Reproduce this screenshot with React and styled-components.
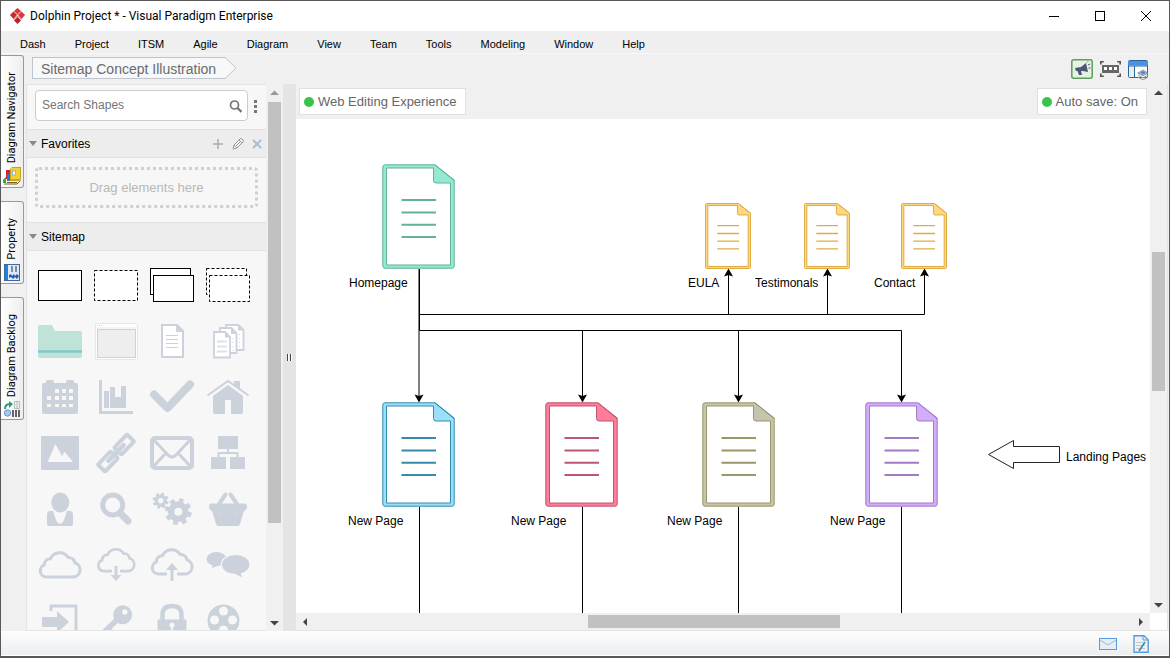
import React from "react";
import styled, { createGlobalStyle, css } from "styled-components";

const GlobalStyle = createGlobalStyle`
  * { box-sizing: border-box; }
  body { margin: 0; font-family: "Liberation Sans", Arial, sans-serif; font-size: 12px; color: #000; }
  button, input { font: inherit; color: inherit; }
  button { border: 0; background: none; padding: 0; cursor: pointer; }
  svg { display: block; flex: none; }
`;

const Frame = styled.div`
  display: flex;
  flex-direction: column;
  height: 100vh;
  border: 1px solid #58585a;
  border-bottom-width: 2px;
  background: #f0f0f0;
`;

/* ---------- title and menu ---------- */

const TitleBar = styled.header`
  display: flex;
  align-items: center;
  height: 30px;
  flex: none;
  padding-left: 9px;
  background: #fff;
`;

const Title = styled.h1`
  flex: 1;
  margin: 0 0 0 5px;
  font: 400 12px/16px Roboto, "Open Sans", sans-serif;
`;

const WindowButton = styled.button`
  display: grid;
  place-items: center;
  width: 46px;
  height: 30px;
`;

const MenuBar = styled.nav`
  display: flex;
  gap: 29px;
  height: 23px;
  flex: none;
  padding: 4px 19px 0;
  border-bottom: 1px solid #f8f8f8;
  background: #efefef;
`;

const MenuItem = styled.button`
  height: 18px;
  font-size: 11px;
  line-height: 18px;
`;

/* ---------- side tabs ---------- */

const Workspace = styled.div`
  display: flex;
  flex: 1;
  min-height: 0;
`;

const TabStrip = styled.div`
  display: flex;
  flex-direction: column;
  gap: 13px;
  width: 25px;
  flex: none;
  padding-top: 1px;
`;

const SideTab = styled.button`
  display: flex;
  flex-direction: column;
  align-items: center;
  gap: 4px;
  width: 23px;
  padding: 16px 1px 2px;
  border: 1px solid #999;
  border-left: 0;
  border-radius: 0 3px 3px 0;
  background: linear-gradient(90deg, #fff, #eee);
  font-family: Roboto, "Noto Sans", sans-serif;
  font-size: 11px;
  line-height: 14px;
`;

const TabText = styled.span`
  writing-mode: vertical-rl;
  transform: rotate(180deg);
  white-space: nowrap;
`;

/* ---------- breadcrumb row ---------- */

const Main = styled.div`
  display: flex;
  flex-direction: column;
  flex: 1;
  min-width: 0;
`;

const TopRow = styled.div`
  display: flex;
  align-items: flex-start;
  justify-content: space-between;
  height: 30px;
  flex: none;
  padding: 3px 21px 0 6px;
`;

const Crumb = styled.a`
  display: flex;
  height: 22px;
  color: #6b6b6b;
  font-size: 14px;
  text-decoration: none;
`;

const CrumbLabel = styled.span`
  padding: 0 8px;
  border: 1px solid #c0c6cc;
  border-right: 0;
  background: #f7f8f9;
  line-height: 22px;
`;

const Tools = styled.div`
  display: flex;
  gap: 7px;
  padding-top: 1px;
`;

const IconButton = styled.button`
  display: grid;
  place-items: center;
`;

/* ---------- shapes panel ---------- */

const Body = styled.div`
  display: flex;
  flex: 1;
  min-height: 0;
`;

const Panel = styled.aside`
  display: flex;
  flex-direction: column;
  width: 240px;
  flex: none;
  overflow: hidden;
  border: 1px solid #e4e4e4;
  border-right: 0;
  background: #f7f7f7;
`;

const SearchRow = styled.div`
  display: flex;
  align-items: center;
  gap: 6px;
  flex: none;
  padding: 5px 7px 8px 8px;
`;

const SearchBox = styled.label`
  display: flex;
  align-items: center;
  width: 213px;
  height: 31px;
  padding: 0 5px 0 6px;
  border: 1px solid #ccc;
  border-radius: 4px;
  background: #fff;
`;

const SearchInput = styled.input`
  flex: 1;
  min-width: 0;
  height: 24px;
  padding: 0 0 2px;
  border: 0;
  outline: 0;
  background: none;
  &::placeholder { color: #757575; opacity: 1; }
`;

const SectionHead = styled.div`
  display: flex;
  align-items: center;
  gap: 8px;
  height: 29px;
  flex: none;
  padding: 0 4px 0 2px;
  border: solid #e2e2e2;
  border-width: 1px 0;
  background: #ededed;
`;

const SectionToggle = styled.button`
  display: flex;
  align-items: center;
  gap: 4px;
  flex: 1;
  line-height: 16px;
`;

const DropZone = styled.div`
  flex: none;
  margin: 9px 8px 14px;
  height: 41px;
  border: 3px dotted #d0d0d0;
  border-radius: 4px;
  color: #b8b8b8;
  font-size: 13px;
  line-height: 35px;
  text-align: center;
`;

const Palette = styled.div`
  display: grid;
  grid-template-columns: repeat(4, 56px);
  grid-auto-rows: 56px;
  padding: 7px 5px 0;
  min-height: 0;
  overflow: hidden;
  flex: 1;
`;

const Splitter = styled.div`
  display: flex;
  align-items: center;
  justify-content: center;
  gap: 1px;
  width: 13px;
  flex: none;
  background: #e4e4e4;
`;

const Grip = styled.span`
  width: 2px;
  height: 7px;
  border-right: 1px solid #fff;
  background: #444;
`;

/* ---------- scroll bars ---------- */

const ScrollBar = styled.div`
  display: flex;
  flex: none;
  background: #f0f0f0;
  ${(p) =>
    p.$horizontal
      ? css`flex-direction: row; height: 17px; flex: 1;`
      : css`flex-direction: column; width: 17px;`}
`;

const ScrollArrow = styled.button`
  display: grid;
  place-items: center;
  width: 17px;
  height: 17px;
  flex: none;
`;

const Track = styled.div`
  flex: ${(p) => p.$share} 1 0;
`;

const Thumb = styled.div`
  flex: ${(p) => p.$share} 1 0;
  margin: ${(p) => (p.$horizontal ? "2px 0" : "0 2px")};
  background: #c1c1c1;
`;

/* ---------- editor ---------- */

const Editor = styled.main`
  display: flex;
  flex-direction: column;
  flex: 1;
  min-width: 0;
  margin-right: 1px;
  border-right: 1px solid #e4e4e4;
  border-bottom: 1px solid #e4e4e4;
`;

const EditorRow = styled.div`
  display: flex;
  flex: ${(p) => (p.$grow ? 1 : "none")};
  min-height: 0;
  background: #fff;
`;

const Sheet = styled.div`
  display: flex;
  flex-direction: column;
  flex: 1;
  min-width: 0;
`;

const SheetBar = styled.div`
  display: flex;
  align-items: center;
  justify-content: space-between;
  height: 35px;
  flex: none;
  padding: 0 3px;
  background: #f0f0f0;
`;

const Chip = styled.div`
  display: flex;
  align-items: center;
  gap: 4px;
  height: 27px;
  padding: 0 8px 0 4px;
  border: 1px solid #e0e0e0;
  background: #fff;
  color: #666;
  font-size: 13px;
`;

const Dot = styled.span`
  width: 10px;
  height: 10px;
  border-radius: 50%;
  background: #39c449;
`;

const Corner = styled.div`
  width: 17px;
  height: 17px;
`;

const Canvas = styled.div`
  position: relative;
  flex: 1;
  overflow: hidden;
  background: #fff;
`;

const Connectors = styled.svg`
  position: absolute;
  inset: 0;
  width: 100%;
  height: 100%;
  overflow: visible;
`;

const Placed = styled.div`
  position: absolute;
  left: ${(p) => p.$x}px;
  top: ${(p) => p.$y}px;
  line-height: 14px;
  white-space: nowrap;
`;

const StatusBar = styled.footer`
  display: flex;
  align-items: center;
  justify-content: flex-end;
  gap: 16px;
  height: 25px;
  flex: none;
  padding: 2px 20px 0 0;
  border-bottom: 1px solid #fff;
  background: linear-gradient(#fdfdfd, #eceeef);
`;

/* ---------- drawings ---------- */

const ARROWS = {
  up: "M0 5l4.5-4.5L9 5z",
  down: "M0 1l4.5 4.5L9 1z",
};

function Bar({ horizontal, before, size, after, paleStart }) {
  const dark = "#444";
  return (
    <ScrollBar $horizontal={horizontal}>
      <ScrollArrow aria-label={horizontal ? "Scroll left" : "Scroll up"}>
        {horizontal ? (
          <svg width="5" height="9"><path d="M5 1v8L1 5z" fill={dark} /></svg>
        ) : (
          <svg width="9" height="6"><path d={ARROWS.up} fill={paleStart ? "#999" : dark} /></svg>
        )}
      </ScrollArrow>
      <Track $share={before} />
      <Thumb $share={size} $horizontal={horizontal} />
      <Track $share={after} />
      <ScrollArrow aria-label={horizontal ? "Scroll right" : "Scroll down"}>
        {horizontal ? (
          <svg width="5" height="9"><path d="M0 1v8l4-4z" fill={dark} /></svg>
        ) : (
          <svg width="9" height="6"><path d={ARROWS.down} fill={dark} /></svg>
        )}
      </ScrollArrow>
    </ScrollBar>
  );
}

function gear(cx, cy, outer, inner, teeth, turn) {
  const points = [];
  const step = (Math.PI * 2) / teeth;
  for (let i = 0; i < teeth; i++) {
    [[-0.3, inner], [-0.22, outer], [0.22, outer], [0.3, inner]].forEach(([t, r]) => {
      const a = (i + t) * step + turn;
      points.push(`${(cx + r * Math.cos(a)).toFixed(2)},${(cy + r * Math.sin(a)).toFixed(2)}`);
    });
  }
  return points.join(" ");
}

const G = "#cbd2db";
const BG = "#f7f7f7";
const CLOUD =
  "M14.5 39h26.500a7.300 7.300 0 0 0 1.800-14.300a6 6 0 0 0-6.600-5.200a10 10 0 0 0-17.700 1.200a6 6 0 0 0-6.200 6.300a6.200 6.200 0 0 0 2.200 12z";

const pageOutline = (x, y, w, h, f) => `M${x} ${y}h${w - f}l${f} ${f}v${h - f}h${-w}z`;

const HOLES = [[23, 19], [30, 19], [37, 19], [15, 26], [23, 26], [30, 26], [37, 26], [15, 34], [23, 34], [30, 34], [37, 34]];

const SHAPES = [
  ["Page", <rect x="6.5" y="12.5" width="43" height="30" fill="#fff" stroke="#000" />],
  ["Optional page", <rect x="6.5" y="12.5" width="43" height="30" fill="#fff" stroke="#000" strokeDasharray="3 2" />],
  ["Pages", <g fill="#fff" stroke="#000"><rect x="6.5" y="10.5" width="40" height="26" /><rect x="9.5" y="17.5" width="40" height="26" /></g>],
  ["Optional pages", <g fill="#fff" stroke="#000" strokeDasharray="3 2"><rect x="6.5" y="10.5" width="40" height="26" /><rect x="9.5" y="17.5" width="40" height="26" /></g>],
  ["Folder", <g><path d="M6 13q0-2 2-2h12l3 6h25q2 0 2 2v23q0 2-2 2H8q-2 0-2-2z" fill="#bfe3d6" /><path d="M6 37.5h44" stroke="#83c6cb" strokeWidth="2.5" /></g>],
  ["Browser", <g><rect x="7.5" y="9.5" width="42" height="36" rx="1" fill="#fff" stroke="#e4e7ec" /><path d="M9 11.5h5" stroke={G} strokeDasharray="1 1" /><path d="M8 14h41" stroke="#e4e7ec" /><rect x="9.5" y="15.5" width="38" height="28" fill="#eee" stroke={G} /></g>],
  ["Document", <g><path d={pageOutline(18, 11, 21, 32, 6)} fill="#fff" stroke={G} strokeWidth="2" /><path d="M32 10l8 8h-8z" fill={G} /><path d="M22 21.5h12M22 25.5h12M22 29.5h12M22 33.5h12" stroke={G} /></g>],
  ["Documents", <g fill="#fff" stroke={G} strokeWidth="1.8">
    <path d={pageOutline(26, 11, 17.5, 25, 5)} /><path d={pageOutline(20, 14, 16.5, 25, 5)} /><path d={pageOutline(14, 18, 16, 25.5, 5)} />
    <path d="M38 10.5v6h6zM31 14v6h6zM25 17.5v6h6z" fill={G} stroke="none" /><path d="M17 27.5h10M17 32.5h10M17 37.5h10" stroke="#dde2e8" /><path d="M33 24v13M39.500 20v13" strokeWidth="1" strokeDasharray="1 3" /></g>],
  ["Calendar", <g fill={G}><path d="M12 13h2v-1q0-2 2-2h4q2 0 2 2v1h12v-1q0-2 2-2h4q2 0 2 2v1h2q2 0 2 2v27q0 2-2 2H12q-2 0-2-2V15q0-2 2-2z" /><g fill={BG}>{HOLES.map(([x, y]) => <rect key={x + "-" + y} x={x} y={y} width="4" height={y === 34 ? 3 : 4} />)}</g></g>],
  ["Chart", <g fill={G}><path d="M11 10h3v31h31v3H11z" /><path d="M16 21h5v17h-5zM22 17h5v10h6V16h5v22H22z" /></g>],
  ["Check", <path d="M10 24.5L23.5 38 46 14.5" fill="none" stroke={G} strokeWidth="8" strokeLinejoin="round" strokeLinecap="round" />],
  ["Home", <g><path d="M7.5 25.5L28 11l20.500 14.500" fill="none" stroke={G} strokeWidth="2" /><path d="M34 11h5q1 0 1 1v7l-6-4zM28 15l15 11v16q0 2-2 2H31V30h-6v14H15q-2 0-2-2V26z" fill={G} /></g>],
  ["Image", <g><rect x="9" y="10" width="38" height="34" rx="1" fill={G} /><path d="M15.700 36l7.600-18 7 12.500 2-5L41 36z" fill={BG} /></g>],
  ["Link", <g transform="rotate(-46 28 27)" fill="none" stroke={G} strokeWidth="4">
    <path d="M24 22H8.500q-1.500 0-1.500 1.500v7q0 1.500 1.500 1.500H24q1.500 0 1.500-1.500V29M25.500 25v-1.500Q25.500 22 24 22" />
    <path d="M32 22h15.500q1.500 0 1.500 1.500v7q0 1.500-1.500 1.500H32q-1.500 0-1.500-1.500V29M30.500 25v-1.500Q30.500 22 32 22" />
    <path d="M17 27h22" strokeWidth="4.500" strokeLinecap="round" /></g>],
  ["Mail", <g fill="none" stroke={G}><rect x="8" y="12" width="40" height="30" rx="3" strokeWidth="4" /><path d="M9 13l15 16q4 4 8 0l15-16M9 41l12-13M47 41L35 28" strokeWidth="3" /></g>],
  ["Hierarchy", <g fill={G}><path d="M18 10h20v13H18zM11 31h15v12H11zM30 31h15v12H30z" /><path d="M18.5 31v-4h19v4M28 23v4" fill="none" stroke={G} strokeWidth="2" /></g>],
  ["User", <g fill={G}><path d="M18 29h20q3 0 3 4v9q0 2-2 2H17q-2 0-2-2v-9q0-4 3-4z" /><path d="M21 28q3 14 7 14t7-14z" fill={BG} /><ellipse cx="28.3" cy="20.5" rx="9" ry="10" /></g>],
  ["Search", <g fill="none" stroke={G}><circle cx="24.7" cy="23" r="10" strokeWidth="5" /><path d="M33 32l7 7" strokeWidth="7" strokeLinecap="round" /></g>],
  ["Settings", <g fill={G}><polygon points={gear(16.7, 18.7, 8.2, 6.2, 8, 0.3)} /><circle cx="16.7" cy="18.7" r="2.6" fill={BG} /><polygon points={gear(34.3, 29.7, 13.6, 10.3, 8, 0.25)} /><circle cx="34.3" cy="29.7" r="4" fill={BG} /></g>],
  ["Basket", <g fill={G}><path d="M12 21.5h32q3 0 3 3t-3 4.500L40 42q-1 2-2 2H18q-1 0-2-2l-4-13q-3-1-3-4.500t3-3z" /><path d="M19 22l6.500-9.500M37 22l-6.500-9.500" stroke={G} strokeWidth="4" strokeLinecap="round" /><path d="M18 28v3M21 31v3M35 31v3M38 28v3" stroke="#dde2e8" strokeDasharray="1 1" /></g>],
  ["Cloud", <path d={CLOUD} fill="none" stroke={G} strokeWidth="3" />],
  ["Download", <g fill="none" stroke={G}><path d={CLOUD} strokeWidth="3" transform="translate(3 -2) scale(.9)" /><path d="M28 27v12" stroke={BG} strokeWidth="8" /><path d="M28 28v10" strokeWidth="3" /><path d="M22.5 37h11L28 43z" fill={G} stroke="none" /></g>],
  ["Upload", <g fill="none" stroke={G}><path d={CLOUD} strokeWidth="3" transform="translate(0 -3)" /><path d="M28 31v9" stroke={BG} strokeWidth="10" /><path d="M28 43V30" strokeWidth="3" /><path d="M22 32h12l-6-7z" fill={G} stroke="none" /></g>],
  ["Comments", <g fill={G}><ellipse cx="16.5" cy="21" rx="10" ry="7" /><path d="M13 26l-1 4 8-3z" /><ellipse cx="35.7" cy="26.5" rx="15" ry="10.5" fill={BG} /><ellipse cx="35.7" cy="26.5" rx="13.7" ry="9.5" /><path d="M34 35l8 4.500-2-7z" /></g>],
  ["Sign in", <g fill={G}><path d="M19 17v-5h25v30H19v-4" fill="none" stroke={G} strokeWidth="3" /><path d="M10 23h15v-6l12 11-12 11v-6H10z" /></g>],
  ["Key", <g><path d="M31 24L13 41" stroke={G} strokeWidth="5.5" /><path d="M20 34l4 4" stroke={G} strokeWidth="4" /><circle cx="34.7" cy="20.7" r="9.5" fill={G} /><circle cx="36.8" cy="18" r="2.7" fill={BG} /></g>],
  ["Lock", <g><path d="M18.5 26v-5q0-9 9.500-9t9.500 9v5" fill="none" stroke={G} strokeWidth="4.5" /><rect x="13.5" y="25.5" width="29" height="22" rx="1" fill={G} /><circle cx="28" cy="31" r="2.5" fill={BG} /><path d="M28 32v5" stroke={BG} strokeWidth="2" /></g>],
  ["Film", <g><circle cx="23.5" cy="26.5" r="16" fill={G} /><g fill={BG}><circle cx="23.5" cy="17" r="4.5" /><circle cx="14.5" cy="26" r="4.5" /><circle cx="32.5" cy="26" r="4.5" /><circle cx="23.5" cy="36" r="4.5" /></g></g>],
];

function PageIcon({ small, fill, stroke }) {
  const w = small ? 46 : 73;
  const h = small ? 66 : 105;
  const one = { vectorEffect: "non-scaling-stroke" };
  return (
    <svg width={w} height={h} viewBox="0 0 73 105" preserveAspectRatio="none">
      <path {...one} d="M3 .8h50L72.200 16v86q0 2.200-2 2.200H3q-2.200 0-2.200-2.200V3Q.8.8 3 .8z" fill={fill} stroke={stroke} />
      <path {...one} d="M4.500 4h47v12.500q0 2.500 2.500 2.500h14.500v82H4.500z" fill="#fff" stroke={stroke} />
      <path {...one} d="M53 1L72 16.500" stroke={stroke} />
      <path {...one} d="M19.500 36h34.500M19.500 48.500h34.500M19.500 60.700h34.500M19.500 73h34.500" stroke={stroke} strokeWidth={small ? 1.3 : 2} />
    </svg>
  );
}

const GREEN = { fill: "#94ead0", stroke: "#64b09b" };
const AMBER = { fill: "#ffd783", stroke: "#dfac3f", small: true };
const NODES = [
  { x: 86, y: 45, ...GREEN },
  { x: 409, y: 84, ...AMBER },
  { x: 508, y: 84, ...AMBER },
  { x: 605, y: 84, ...AMBER },
  { x: 86, y: 283, fill: "#99e1fa", stroke: "#368aac" },
  { x: 249, y: 283, fill: "#ff7d98", stroke: "#bd5670" },
  { x: 406, y: 283, fill: "#c5c4ac", stroke: "#9a976b" },
  { x: 569, y: 283, fill: "#d3acfa", stroke: "#a17bc6" },
];

const LABELS = [
  ["Homepage", 53, 157],
  ["EULA", 392, 157],
  ["Testimonals", 459, 157],
  ["Contact", 578, 157],
  ["New Page", 52, 395],
  ["New Page", 215, 395],
  ["New Page", 371, 395],
  ["New Page", 534, 395],
  ["Landing Pages", 770, 331],
];

const down = (x) => `M${x} 283.5l-4.500-8 4.500 1.500 4.500-1.500z`;
const up = (x) => `M${x} 149.5l-4.500 8 4.500-1.500 4.500 1.500z`;

function Diagram() {
  return (
    <Canvas>
      <Connectors fill="none" stroke="#000">
        <path d="M123 150v128" />
        <path d="M123.5 150v61.5h482V278M123.5 195.5h505V154M432.5 195.5V154M531.5 195.5V154M286.5 211.5V278M442.5 211.5V278" />
        <path d="M123.5 388v2000M286.5 388v2000M442.5 388v2000M605.5 388v2000" />
        <path d={[123, 286.5, 442.5, 605.5].map(down).join("") + [432.5, 531.5, 628.5].map(up).join("")} fill="#000" stroke="none" />
        <path d="M692.5 335.5l25-14v6h46v16h-46v6z" fill="#fff" stroke="#222" />
      </Connectors>
      {NODES.map(({ x, y, ...look }) => (
        <Placed key={`${x}-${y}`} $x={x} $y={y}><PageIcon {...look} /></Placed>
      ))}
      {LABELS.map(([text, x, y]) => (
        <Placed key={`${x}-${y}`} $x={x} $y={y}>{text}</Placed>
      ))}
    </Canvas>
  );
}

const Triangle = () => <svg width="8" height="5"><path d="M0 0h8L4 5z" fill="#8a8a8a" /></svg>;

const MENU = ["Dash", "Project", "ITSM", "Agile", "Diagram", "View", "Team", "Tools", "Modeling", "Window", "Help"];

export default function App() {
  return (
    <Frame>
      <GlobalStyle />
      <TitleBar>
        <svg width="15" height="16" viewBox="0 0 15 16">
          <path d="M4 3l3.500-3L11 3 7.500 6z" fill="#d8383a" />
          <path d="M0 7l3.500-3.500L7 7l-3.500 4z" fill="#c82a2d" />
          <path d="M8 7l3.500-3.500L15 7l-3.500 4z" fill="#d8383a" />
          <path d="M4 12.500L7.500 9l3.500 3.500L7.500 16z" fill="#b52528" />
          <path d="M4 3.500L7.500 7 11 3.500M4 11.500L7.500 8l3.500 3.500" stroke="#e05a5a" fill="none" />
        </svg>
        <Title>Dolphin Project * - Visual Paradigm Enterprise</Title>
        <WindowButton aria-label="Minimize"><svg width="10" height="10"><path d="M0 5.500h10" stroke="#000" /></svg></WindowButton>
        <WindowButton aria-label="Maximize"><svg width="10" height="10"><rect x=".5" y=".5" width="9" height="9" fill="none" stroke="#000" /></svg></WindowButton>
        <WindowButton aria-label="Close"><svg width="10" height="10"><path d="M0 0l10 10M10 0L0 10" stroke="#000" /></svg></WindowButton>
      </TitleBar>

      <MenuBar>{MENU.map((m) => <MenuItem key={m}>{m}</MenuItem>)}</MenuBar>

      <Workspace>
        <TabStrip>
          <SideTab>
            <TabText>Diagram Navigator</TabText>
            <svg width="18" height="18">
              <path d="M0 13l3-3v6H0z" fill="#2fae2c" /><path d="M3 3h4v9H3z" fill="#cf2438" /><path d="M4 7h4v7H4z" fill="#2478c8" />
              <path d="M7 2l2-2h9v12l-2 2H7z" fill="#c9a21a" /><path d="M8 1h9v11H8z" fill="#ecd03c" /><rect x="9.5" y="4" width="3" height="4" fill="#fff" stroke="#8fa6bb" strokeWidth=".8" />
              <path d="M1 17h13l3.500-3.500M4 15.500h10" fill="none" stroke="#775f20" />
            </svg>
          </SideTab>
          <SideTab>
            <TabText>Property</TabText>
            <svg width="16" height="17">
              <rect x=".5" y=".5" width="15" height="16" fill="#dfe9f8" stroke="#42669a" /><path d="M1 1h3v15H1z" fill="#1683e8" />
              <path d="M7 2h2v6H7zM11 2h2v6h-2z" fill="#7b8ba8" /><path d="M5 11l2-1 1 2 2-2 1 2 2-2 2 2-2 3-2-2-2 2-2-2-2 1z" fill="#2b59b4" />
            </svg>
          </SideTab>
          <SideTab>
            <TabText>Diagram Backlog</TabText>
            <svg width="16" height="16">
              <path d="M1 8q0-5 5-5" fill="none" stroke="#259b78" strokeWidth="2" /><path d="M5 0l4 3-4 4z" fill="#259b78" />
              <circle cx="3.5" cy="12" r="3.2" fill="#a7c8f2" stroke="#6c96cc" /><path d="M8 9h2v7H8zM11 9h2v7h-2zM14 9h2v7h-2z" fill="#666" />
              <path d="M10.500.5h5v7h-5zM13 .5v7" fill="#eee" stroke="#bbb" />
            </svg>
          </SideTab>
        </TabStrip>

        <Main>
          <TopRow>
            <Crumb href="#sitemap">
              <CrumbLabel>Sitemap Concept Illustration</CrumbLabel>
              <svg width="13" height="22"><path d="M0 .5h1l11 10.500-11 10.500H0" fill="#f7f8f9" stroke="#c0c6cc" /></svg>
            </Crumb>
            <Tools>
              <IconButton aria-label="Announcements">
                <svg width="22" height="20">
                  <rect x=".8" y=".8" width="20.4" height="18.4" rx="2" fill="#e9eee8" stroke="#57a357" strokeWidth="1.5" />
                  <path d="M4 9l6-1 5-4 2 9-5-1-2 0 1 4H8l-1.500-4H5z" fill="#485a70" /><path d="M16 3.500l1-1M17 6l2-1M17.500 9h2" stroke="#485a70" />
                </svg>
              </IconButton>
              <IconButton aria-label="Fit to width">
                <svg width="21" height="16">
                  <path d="M.8 3.500V.8h3M17.200.8h3v2.700M.8 12.500v2.700h3M17.200 15.200h3v-2.700" fill="none" stroke="#555" strokeWidth="1.6" />
                  <rect x="2" y="4" width="17" height="8" fill="#666" /><path d="M4 6h3v3H4zM9 6h3v3H9zM14 6h3v3h-3z" fill="#fff" />
                </svg>
              </IconButton>
              <IconButton aria-label="Panes">
                <svg width="20" height="22" viewBox="0 -2 20 22">
                  <rect x=".5" y=".5" width="19" height="17" rx="1" fill="#fff" stroke="#2c6592" /><path d="M0 1h20v4.500H0z" fill="#4b8fe8" />
                  <path d="M1 7h5v10H1z" fill="#e5eef8" /><path d="M6.500 6v12M0 6h20" stroke="#2c6592" />
                  <path d="M9.500 13l5.500-3 5 3-5 3z" fill="#8ea9c8" stroke="#888" strokeWidth=".6" /><path d="M13 12.500h4M15 11v3" stroke="#3d86d8" /><path d="M10 15l5 3 5-3M10 17l5 3 5-3" fill="none" stroke="#999" />
                </svg>
              </IconButton>
            </Tools>
          </TopRow>

          <Body>
            <Panel>
              <SearchRow>
                <SearchBox>
                  <SearchInput aria-label="Search shapes" placeholder="Search Shapes" />
                  <svg width="13" height="14"><circle cx="5.5" cy="6" r="4" fill="none" stroke="#777" strokeWidth="1.7" /><path d="M8.500 9l4 4" stroke="#777" strokeWidth="2.3" /></svg>
                </SearchBox>
                <IconButton aria-label="More options"><svg width="4" height="14"><path d="M0 1h3v3H0zM0 6h3v3H0zM0 11h3v3H0z" fill="#777" /></svg></IconButton>
              </SearchRow>
              <SectionHead>
                <SectionToggle><Triangle />Favorites</SectionToggle>
                <IconButton aria-label="Add"><svg width="12" height="12"><path d="M6 1v10M1 6h10" stroke="#aaa" strokeWidth="1.5" /></svg></IconButton>
                <IconButton aria-label="Edit"><svg width="12" height="12"><path d="M1 11l1-4 6-6q1-1 2 0l1 1q1 1 0 2l-6 6zM2 7l3 3M7 2l3 3M4 8l5-5" fill="#f4f4f4" stroke="#999" /></svg></IconButton>
                <IconButton aria-label="Remove"><svg width="10" height="10"><path d="M1 1l8 8M9 1L1 9" stroke="#a9bed3" strokeWidth="2" /></svg></IconButton>
              </SectionHead>
              <DropZone>Drag elements here</DropZone>
              <SectionHead><SectionToggle><Triangle />Sitemap</SectionToggle></SectionHead>
              <Palette>
                {SHAPES.map(([name, art]) => (
                  <IconButton key={name} aria-label={name}><svg width="56" height="56">{art}</svg></IconButton>
                ))}
              </Palette>
            </Panel>
            <Bar before={1} size={422} after={91} paleStart />
            <Splitter><Grip /><Grip /></Splitter>

            <Editor>
              <EditorRow $grow>
                <Sheet>
                  <SheetBar>
                    <Chip><Dot />Web Editing Experience</Chip>
                    <Chip><Dot />Auto save: On</Chip>
                  </SheetBar>
                  <Diagram />
                </Sheet>
                <Bar before={151} size={139} after={205} />
              </EditorRow>
              <EditorRow>
                <Bar horizontal before={275} size={252} after={293} />
                <Corner />
              </EditorRow>
            </Editor>
          </Body>
        </Main>
      </Workspace>

      <StatusBar>
        <IconButton aria-label="Messages">
          <svg width="18" height="12"><rect x=".5" y=".5" width="17" height="11" fill="#e8eff4" stroke="#5a9be0" /><path d="M1 2l8 5 8-5" fill="none" stroke="#8fbbe6" /></svg>
        </IconButton>
        <IconButton aria-label="Notes">
          <svg width="16" height="18"><path d="M1 .8h10L15.200 5v12.200H1z" fill="#eef2f5" stroke="#5a9be0" strokeWidth="1.4" /><path d="M10 1v4h5" fill="none" stroke="#5a9be0" /><path d="M3 7.500h7M3 10.500h9M3 13.500h9" stroke="#c4c8cc" /><path d="M6 16l6-9" stroke="#2f95a8" strokeWidth="1.6" /></svg>
        </IconButton>
      </StatusBar>
    </Frame>
  );
}
